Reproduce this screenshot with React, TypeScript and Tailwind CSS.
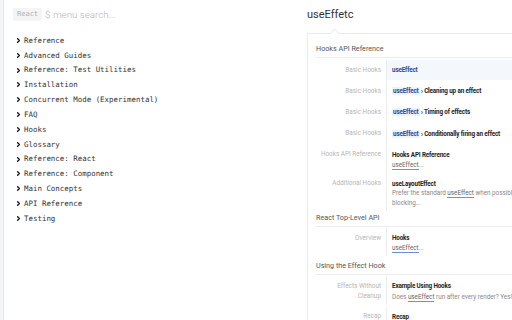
import { ChevronRight } from 'lucide-react';

const menu = [
  'Reference',
  'Advanced Guides',
  'Reference: Test Utilities',
  'Installation',
  'Concurrent Mode (Experimental)',
  'FAQ',
  'Hooks',
  'Glossary',
  'Reference: React',
  'Reference: Component',
  'Main Concepts',
  'API Reference',
  'Testing',
];

function Hl({ children }: { children: React.ReactNode }) {
  return <span className="bg-[#eef2fa] px-[1px] text-[#2c4a9a]">{children}</span>;
}

function Ul({ children }: { children: React.ReactNode }) {
  return <span className="border-b border-[#6d8fd6] text-[#666]">{children}</span>;
}

function Row({
  label,
  active,
  tight,
  lh = 'leading-[10px]',
  children,
}: {
  label: React.ReactNode;
  active?: boolean;
  tight?: boolean;
  lh?: string;
  children: React.ReactNode;
}) {
  const pad = tight ? 'pt-[5px] pb-[3px]' : 'py-[5px]';
  return (
    <div className="flex">
      <div
        className={`w-[70px] shrink-0 whitespace-nowrap pr-[5px] text-right text-[6.4px] text-[#b5b5b5] ${pad} ${lh}`}
      >
        {label}
      </div>
      <div
        className={`my-[0.6px] flex-1 whitespace-nowrap border-l border-[#ececec] pl-[5px] text-[6.3px] ${pad} ${lh} ${
          active ? 'bg-[#f4f7fc]' : ''
        }`}
      >
        {children}
      </div>
    </div>
  );
}

function Section({ title }: { title: string }) {
  return (
    <div className="border-b border-[#ececec] pb-[2px] text-[7.2px] leading-[12px] text-[#555]">
      {title}
    </div>
  );
}

export default function App() {
  return (
    <div className="flex h-[320px] w-[512px] overflow-hidden bg-white">
      {/* left rail */}
      <div className="w-[4px] shrink-0 border-r border-[#e3e6ea] bg-[#f4f5f7]" />

      {/* menu */}
      <div className="w-[303px] shrink-0 pl-[9px] pt-[8px]">
        <div className="flex items-center gap-[3px]">
          <span className="rounded-[2px] bg-[#f4f4f4] px-[4px] py-[2px] font-['DejaVu_Sans_Mono',monospace] text-[7px] leading-[9px] text-[#b0b0b0]">
            React
          </span>
          <span className="font-['Roboto',sans-serif] text-[9.8px] font-light leading-[12px] text-[#b5b5b5]">
            $ menu search...
          </span>
        </div>
        <ul className="mt-[12px] font-['DejaVu_Sans_Mono',monospace] text-[7.45px] text-[#333]">
          {menu.map((m) => (
            <li key={m} className="flex h-[14.83px] items-center">
              <ChevronRight className="ml-[2px] mr-[2px] h-[7px] w-[7px] text-[#111]" strokeWidth={4.5} />
              <span>{m}</span>
            </li>
          ))}
        </ul>
      </div>

      {/* result panel */}
      <div className="w-[256px] shrink-0 font-['Roboto',sans-serif]">
        <div className="pt-[8px] text-[11px] leading-[14px] text-[#333]">useEffetc</div>
        <div className="relative mt-[11px] w-[260px] border border-[#ebebeb] bg-white px-[8px] pt-[9px] shadow-[0_1px_3px_rgba(0,0,0,0.04)]">
          <div className="absolute -top-[4px] left-[23px] h-[7px] w-[7px] rotate-45 border-l border-t border-[#ebebeb] bg-white" />
          <Section title="Hooks API Reference" />
          <div className="mt-[1.5px]">
            <Row label="Basic Hooks" active>
              <span className="font-bold tracking-[-0.15px] text-[#2c4a9a]">useEffect</span>
            </Row>
            <Row label="Basic Hooks">
              <span className="font-bold tracking-[-0.15px] text-[#222]">
                <Hl>useEffect</Hl> › Cleaning up an effect
              </span>
            </Row>
            <Row label="Basic Hooks">
              <span className="font-bold tracking-[-0.15px] text-[#222]">
                <Hl>useEffect</Hl> › Timing of effects
              </span>
            </Row>
            <Row label="Basic Hooks">
              <span className="font-bold tracking-[-0.15px] text-[#222]">
                <Hl>useEffect</Hl> › Conditionally firing an effect
              </span>
            </Row>
            <Row label="Hooks API Reference" tight>
              <div className="font-bold tracking-[-0.15px] text-[#222]">Hooks API Reference</div>
              <div>
                <Ul>useEffect</Ul>
                <span className="text-[#888]">...</span>
              </div>
            </Row>
            <Row label="Additional Hooks" tight>
              <div className="font-bold tracking-[-0.15px] text-[#222]">useLayoutEffect</div>
              <div className="leading-[9.5px] text-[#888]">
                Prefer the standard <Ul>useEffect</Ul> when possible to avoid
              </div>
              <div className="leading-[9.5px] text-[#888]">blocking...</div>
            </Row>
          </div>
          <Section title="React Top-Level API" />
          <div className="mt-[1px]">
            <Row label="Overview" tight>
              <div className="font-bold tracking-[-0.15px] text-[#222]">Hooks</div>
              <div>
                <Ul>useEffect</Ul>
                <span className="text-[#888]">...</span>
              </div>
            </Row>
          </div>
          <div className="pt-[3px]">
            <Section title="Using the Effect Hook" />
          </div>
          <div className="mt-[1px]">
            <Row
              tight
              lh="leading-[10.5px]"
              label={
                <>
                  Effects Without
                  <br />
                  Cleanup
                </>
              }
            >
              <div className="font-bold tracking-[-0.15px] text-[#222]">Example Using Hooks</div>
              <div className="text-[#888]">
                Does <Ul>useEffect</Ul> run after every render? Yes! By default,
              </div>
            </Row>
            <Row label="Recap">
              <div className="font-bold tracking-[-0.15px] text-[#222]">Recap</div>
              <div className="text-[#888]">&nbsp;</div>
            </Row>
          </div>
        </div>
      </div>
    </div>
  );
}
